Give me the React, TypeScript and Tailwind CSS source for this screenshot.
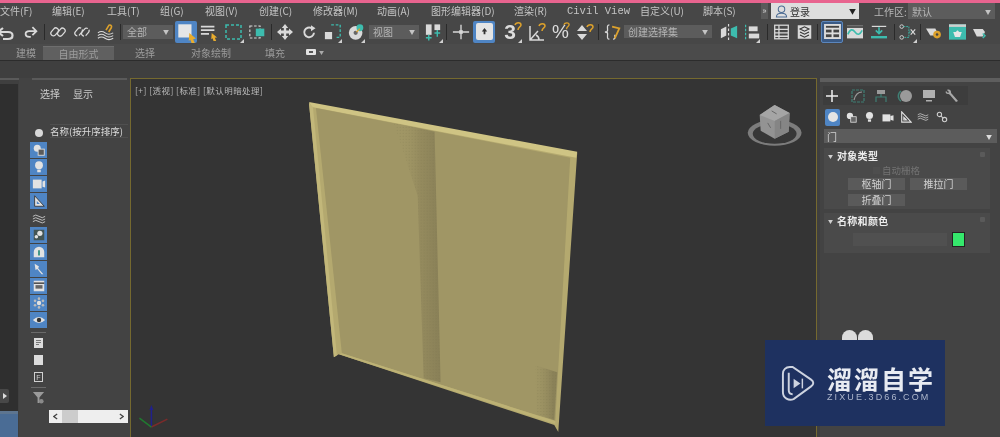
import React from "react";

const cjk = "font-['Noto_Sans_CJK_SC','Liberation_Sans',sans-serif]";

const L = "#d9d9d9";
const T = "#3dbcae";
const O = "#dca12c";

function Ic({ children, vb = "0 0 20 20" }: { children: React.ReactNode; vb?: string }) {
  return (
    <svg viewBox={vb} className="w-full h-full" fill="none">
      {children}
    </svg>
  );
}

function Slot({ c, children }: { c: string; children?: React.ReactNode }) {
  return <div className={`relative shrink-0 h-[22px] flex items-center justify-center ${c}`}>{children}</div>;
}

function Corner() {
  return <div className="absolute right-0 bottom-0 w-0 h-0 border-l-[4px] border-l-transparent border-b-[4px] border-b-[#d0d0d0]" />;
}

function Sep({ c }: { c: string }) {
  return <div className={`shrink-0 w-px h-[16px] bg-[#2a2a2a] ${c}`} />;
}

function Drop({ c, text, h = "h-[14px]" }: { c: string; text: string; h?: string }) {
  return (
    <div className={`shrink-0 ${h} bg-[#5c5c5c] flex items-center justify-between px-1 text-[10px] text-[#b4b4b4] ${cjk} ${c}`}>
      <span>{text}</span>
      <span className="text-[6px] text-[#c4c4c4]">▼</span>
    </div>
  );
}

const cursor = <path d="M13 11l6 5-2.500.5L18 20h-3l-1-3-1.500 1z" fill="#e8ac2e" />;

const Link = ({ broken }: { broken?: boolean }) => (
  <Ic>
    <rect x="0.500" y="6.500" width="11" height="6.500" rx="3.200" transform="rotate(-50 6 10)" stroke={L} strokeWidth="1.600" strokeDasharray={broken ? "9 2" : undefined} />
    <rect x="8.500" y="7" width="11" height="6.500" rx="3.200" transform="rotate(-50 14 10)" stroke={L} strokeWidth="1.600" strokeDasharray={broken ? "9 2" : undefined} />
  </Ic>
);

const menu: [string, string][] = [
  ["文件(F)", "w-[52px]"],
  ["编辑(E)", "w-[55px]"],
  ["工具(T)", "w-[53px]"],
  ["组(G)", "w-[45px]"],
  ["视图(V)", "w-[54px]"],
  ["创建(C)", "w-[54px]"],
  ["修改器(M)", "w-[64px]"],
  ["动画(A)", "w-[54px]"],
  ["图形编辑器(D)", "w-[83px]"],
  ["渲染(R)", "w-[53px]"],
  ["Civil View", "w-[73px]"],
  ["自定义(U)", "w-[63px]"],
  ["脚本(S)", "w-[57px]"],
];

const tabs: [string, string][] = [
  ["建模", "ml-[16px] w-[18px]"],
  ["自由形式", "ml-[9px] w-[71px] bg-[#606060] h-[14px] mt-[2px] border-t border-[#6e6e6e]"],
  ["选择", "ml-[21px] w-[18px]"],
  ["对象绘制", "ml-[38px] w-[36px]"],
  ["填充", "ml-[38px] w-[18px]"],
];

function Blue({ children }: { children: React.ReactNode }) {
  return (
    <div className="w-[17px] h-[16px] mb-px bg-[#4f85c4] flex items-center justify-center shrink-0">
      <svg viewBox="0 0 16 16" className="w-[14px] h-[14px]" fill="none">
        {children}
      </svg>
    </div>
  );
}

const C = "#e2e2e2";

function LeftIcons() {
  return (
    <div className="w-[17px] ml-[11px] mt-[51px] flex flex-col items-center shrink-0">
      <div className="w-[8px] h-[8px] rounded-full bg-[#d8d8d8] mb-[5px]" />
      <Blue>
        <circle cx="6" cy="6" r="4" fill={C} />
        <rect x="7" y="7" width="7" height="7" fill="#5a5a5a" stroke={C} />
      </Blue>
      <Blue>
        <circle cx="8" cy="6" r="4.500" fill={C} />
        <rect x="6" y="11" width="4" height="3" fill={C} />
      </Blue>
      <Blue>
        <rect x="1" y="3" width="10" height="10" fill={C} />
        <path d="M12 5l3-1v8l-3-1z" fill={C} />
      </Blue>
      <Blue>
        <path d="M3 2v12h11z" fill={C} stroke="#333" />
        <path d="M5.500 8v3.500h3.500z" fill="#4f85c4" />
      </Blue>
      <div className="h-[17px] flex items-center shrink-0">
        <svg viewBox="0 0 16 12" className="w-[14px] h-[12px]" fill="none" stroke="#cfcfcf">
          <path d="M1 3q3-3 7 0t7 0M1 6q3-3 7 0t7 0M1 9q3-3 7 0t7 0" />
        </svg>
      </div>
      <Blue>
        <rect x="2" y="2" width="12" height="12" fill="#455" />
        <circle cx="9" cy="6" r="3" fill={C} />
        <circle cx="5" cy="10" r="2" fill={C} />
      </Blue>
      <Blue>
        <path d="M2 14V8a6 6 0 0 1 12 0v6z" fill={C} />
        <rect x="7" y="6" width="2" height="6" fill="#2d8c7c" />
      </Blue>
      <Blue>
        <path d="M3 2l5 3-1 2 6 7-2 0-5-6-2 1z" fill={C} />
      </Blue>
      <Blue>
        <rect x="2" y="2" width="12" height="12" fill={C} />
        <rect x="2" y="4" width="12" height="1.500" fill="#333" />
        <rect x="4" y="7" width="8" height="4" fill="#666" />
      </Blue>
      <Blue>
        <circle cx="8" cy="8" r="2.500" fill={C} />
        <circle cx="8" cy="3" r="1.500" fill="#bbb" />
        <circle cx="8" cy="13" r="1.500" fill="#bbb" />
        <circle cx="3.500" cy="5.500" r="1.500" fill="#bbb" />
        <circle cx="12.500" cy="5.500" r="1.500" fill="#bbb" />
        <circle cx="3.500" cy="10.500" r="1.500" fill="#bbb" />
        <circle cx="12.500" cy="10.500" r="1.500" fill="#bbb" />
      </Blue>
      <Blue>
        <path d="M1 8q7-7 14 0q-7 7-14 0z" fill={C} />
        <circle cx="8" cy="8" r="2.500" fill="#333" />
      </Blue>
      <div className="w-[15px] h-px bg-[#6a6a6a] mt-[3px] shrink-0" />
      <div className="w-[9px] h-[10px] bg-[#dcdcdc] mt-[5px] p-[2px] flex flex-col gap-px shrink-0">
        <div className="h-px bg-[#777]" />
        <div className="h-px bg-[#777]" />
        <div className="h-px w-[3px] bg-[#777]" />
      </div>
      <div className="w-[9px] h-[10px] bg-[#dcdcdc] mt-[7px] shrink-0" />
      <div className="w-[9px] h-[10px] border border-[#d0d0d0] mt-[7px] shrink-0 flex items-center justify-center text-[7px] leading-none text-[#d0d0d0] font-['Liberation_Sans',sans-serif]">F</div>
      <div className="w-[15px] h-px bg-[#6a6a6a] mt-[5px] shrink-0" />
      <svg viewBox="0 0 14 14" className="w-[13px] h-[13px] mt-[3px] shrink-0">
        <path d="M1 1h12L8 7v6H6V7z" fill="#9a9a9a" />
        <circle cx="10" cy="11" r="2.500" fill="#8a8a8a" />
      </svg>
    </div>
  );
}

function Rollout({ title, c, children }: { title: string; c: string; children: React.ReactNode }) {
  return (
    <div className={`w-[166px] ml-[4px] bg-[#4a4a4a] relative ${c}`}>
      <div className={`h-[15px] pl-[4px] flex items-center gap-[4px] text-[10px] font-bold text-[#ececec] ${cjk}`}>
        <span className="text-[5px] text-[#d0d0d0]">▼</span>
        <span className="tracking-[0.3px]">{title}</span>
      </div>
      <div className="absolute right-[5px] top-[4px] w-[5px] h-[5px] rounded-[1px] bg-[#5a5a5a]" />
      {children}
    </div>
  );
}

function Btn({ t }: { t: string }) {
  return <div className={`w-[57px] h-[12px] bg-[#5a5a5a] text-[10px] leading-[12px] text-[#d0d0d0] text-center ${cjk}`}>{t}</div>;
}

function RightPanel() {
  return (
    <div className="w-[180px] ml-[3px] shrink-0 bg-[#434343] relative">
      <div className="h-[4px] bg-[#5e5e5e]" />
      <div className="flex items-center h-[19px] mt-[4px] bg-[#3d3d3d] w-[145px] ml-[3px]">
        <svg viewBox="0 0 14 14" className="w-[14px] h-[14px] ml-[2px]" stroke="#efefef" strokeWidth="1.500">
          <path d="M7 1v12M1 7h12" />
        </svg>
        <svg viewBox="0 0 14 14" className="w-[14px] h-[14px] ml-[12px]" fill="none" stroke="#3f7f74" strokeWidth="1.200">
          <rect x="1" y="1" width="12" height="12" strokeDasharray="3 1" />
          <path d="M3 11Q5 3 11 3" stroke="#9a9a9a" />
        </svg>
        <svg viewBox="0 0 14 14" className="w-[14px] h-[14px] ml-[9px]" fill="none" stroke="#3f7f74" strokeWidth="1.200">
          <rect x="3" y="1" width="8" height="4" fill="#9a9a9a" stroke="none" />
          <path d="M7 5v3M2 13V8h10v5" />
        </svg>
        <svg viewBox="0 0 16 14" className="w-[16px] h-[14px] ml-[9px]">
          <circle cx="9" cy="7" r="6" fill="#9a9a9a" />
          <path d="M4 2a6 6 0 0 0 0 10" stroke="#3f7f74" strokeWidth="1.500" fill="none" />
        </svg>
        <svg viewBox="0 0 14 14" className="w-[14px] h-[14px] ml-[9px]">
          <rect x="1" y="1" width="12" height="8" fill="#b0b0b0" />
          <rect x="4" y="11" width="6" height="1.500" fill="#b0b0b0" />
        </svg>
        <svg viewBox="0 0 14 14" className="w-[14px] h-[14px] ml-[9px]" fill="none">
          <path d="M2 1c2-1 4 0 4 2 0 1 0 1 1 2l6 7-2 1-6-7c-1-1-1-1-2-1-2 0-3-2-2-3l2 2 1-1z" fill="#a8a8a8" />
        </svg>
      </div>
      <div className="flex items-center h-[18px] mt-[3px] ml-[5px]">
        <div className="w-[15px] h-[17px] rounded-[2px] bg-[#4f85c4] flex items-center justify-center">
          <div className="w-[10px] h-[10px] rounded-full bg-[#e4e4e4]" />
        </div>
        <svg viewBox="0 0 14 14" className="w-[11px] h-[11px] ml-[6px]">
          <circle cx="5" cy="5" r="4" fill={C} />
          <rect x="6" y="6" width="7" height="7" fill="#666" stroke={C} />
        </svg>
        <svg viewBox="0 0 14 14" className="w-[11px] h-[12px] ml-[7px]">
          <circle cx="7" cy="5" r="4.500" fill={C} />
          <rect x="5" y="10" width="4" height="3" fill={C} />
        </svg>
        <svg viewBox="0 0 14 14" className="w-[12px] h-[11px] ml-[7px]">
          <rect x="0" y="3" width="10" height="9" fill={C} />
          <path d="M10 5l4-1v7l-4-1z" fill={C} />
        </svg>
        <svg viewBox="0 0 14 14" className="w-[12px] h-[12px] ml-[6px]" fill="none" stroke={C} strokeWidth="1.300">
          <path d="M2 1v12h11z" />
          <path d="M4.500 7.500v3h3z" />
        </svg>
        <svg viewBox="0 0 16 12" className="w-[12px] h-[10px] ml-[5px]" fill="none" stroke="#cfcfcf">
          <path d="M1 3q3-3 7 0t7 0M1 6q3-3 7 0t7 0M1 9q3-3 7 0t7 0" />
        </svg>
        <svg viewBox="0 0 14 14" className="w-[12px] h-[12px] ml-[7px]" fill="none" stroke="#cfcfcf" strokeWidth="1.300">
          <circle cx="4" cy="4" r="2.500" />
          <circle cx="10" cy="10" r="2.500" />
          <path d="M6 6l2 2" />
        </svg>
      </div>
      <div className={`h-[14px] mt-[3px] ml-[4px] w-[173px] bg-[#5c5c5c] flex items-center justify-between px-[3px] text-[10px] text-[#d0d0d0] ${cjk}`}>
        <span>门</span>
        <span className="text-[6px] text-[#dddddd] mr-[2px]">▼</span>
      </div>
      <Rollout title="对象类型" c="h-[61px] mt-[5px]">
        <div className={`h-[14px] flex items-center pl-[49px] gap-[2px] text-[9.500px] text-[#727272] ${cjk}`}>
          <div className="w-[7px] h-[7px] bg-[#4e4e4e]" />
          <span>自动栅格</span>
        </div>
        <div className="flex gap-[5px] pl-[24px] mt-px">
          <Btn t="枢轴门" />
          <Btn t="推拉门" />
        </div>
        <div className="pl-[24px] mt-[4px]">
          <Btn t="折叠门" />
        </div>
      </Rollout>
      <Rollout title="名称和颜色" c="h-[40px] mt-[4px]">
        <div className="flex items-center pl-[29px] mt-[4px]">
          <div className="w-[94px] h-[13px] bg-[#505050]" />
          <div className="w-[13px] h-[15px] ml-[5px] bg-[#35e86c] border border-[#222]" />
        </div>
      </Rollout>
      <div className="flex gap-px ml-[22px] mt-[77px]">
        <div className="w-[15px] h-[20px] rounded-full bg-[#dcdcdc]" />
        <div className="w-[15px] h-[20px] rounded-full bg-[#dcdcdc]" />
      </div>
    </div>
  );
}

function Scene() {
  return (
    <svg viewBox="130 78 686 359" className="absolute inset-0 w-full h-full">
      <defs>
        <linearGradient id="g" gradientUnits="userSpaceOnUse" x1="400" y1="0" x2="438" y2="0">
          <stop offset="0" stopColor="#a09665" stopOpacity="0" />
          <stop offset="0.5" stopColor="#958b5e" />
          <stop offset="1" stopColor="#8a8158" />
        </linearGradient>
        <linearGradient id="h" gradientUnits="userSpaceOnUse" x1="532" y1="0" x2="553" y2="0">
          <stop offset="0" stopColor="#a09665" stopOpacity="0" />
          <stop offset="1" stopColor="#8a8158" />
        </linearGradient>
        <pattern id="d" width="3" height="3" patternUnits="userSpaceOnUse">
          <rect width="1" height="1" fill="#6f6845" fillOpacity="0.220" />
        </pattern>
      </defs>
      <polygon points="308,102 577,152 558,432 554,425 338,354 333,357" fill="#b4a96f" />
      <polygon points="308,101 577,151 576,157 311,106" fill="#cfc484" />
      <polygon points="315,107 570,157 555,421 341,353" fill="#a09665" />
      <polygon points="308,102 312,106 336,355 333,357" fill="#c2b77a" />
      <polygon points="341,353 555,421 555,424 338,354" fill="#bdb275" />
      <polygon points="393,122 434,131 440,382 423,378 417,195" fill="url(#g)" />
      <polygon points="393,122 434,131 440,382 423,378 417,195" fill="url(#d)" />
      <polygon points="535,365 557,372 554,420 536,414" fill="url(#h)" />
      <polygon points="535,365 557,372 554,420 536,414" fill="url(#d)" />
      {/* view cube */}
      <ellipse cx="775" cy="132" rx="27" ry="13" fill="#7c7c7c" />
      <ellipse cx="775" cy="133" rx="22" ry="10" fill="#373737" />
      <polygon points="760,114 775,104 790,112 789,131 775,138 761,130" fill="#939393" />
      <polygon points="760,114 775,104 790,112 775,120" fill="#a5a5a5" />
      <polygon points="775,120 790,112 789,131 775,138" fill="#858585" />
      <path d="M768 122l3 5M781 120v8M772 110l5 3" stroke="#666" strokeWidth="1" />
      {/* axes */}
      <path d="M150 410V427" stroke="#20208c" strokeWidth="1.500" />
      <path d="M150 405l-2 5h4z" fill="#20208c" />
      <path d="M150 427L166 419" stroke="#7c2a2a" strokeWidth="1.500" />
      <path d="M150 427L138 418" stroke="#207a30" strokeWidth="1.500" />
    </svg>
  );
}

export default function App() {
  return (
    <div className="w-[1000px] h-[437px] overflow-hidden bg-[#3f3f3f] flex flex-col relative blur-[0.35px]">
      <div className="h-[3px] bg-[#e8648f] shrink-0" />
      {/* Menu */}
      <div className={`h-[16px] bg-[#474747] shrink-0 flex items-center text-[10px] text-[#c4c4c4] ${cjk}`}>
        <div className="flex items-center shrink-0">
          {menu.map(([t, w]) => (
            <span key={t} className={`${w} shrink-0 whitespace-nowrap leading-[16px] ${t === "Civil View" ? "font-['Liberation_Mono',monospace] text-[10.500px]" : ""}`}>
              {t}
            </span>
          ))}
        </div>
        <span className="w-[7px] ml-[1px] h-[16px] bg-[#5a5a5a] text-[9px] leading-[15px] text-[#d0d0d0] text-center shrink-0">»</span>
        <div className="w-[88px] h-[16px] ml-[3px] bg-[#dedede] flex items-center text-[#333] shrink-0">
          <svg viewBox="0 0 14 14" className="w-[13px] h-[13px] ml-[4px]" fill="none" stroke="#4a6a92" strokeWidth="1.100">
            <circle cx="7" cy="4.500" r="3.500" />
            <path d="M1.500 13c0-3 3-4 5.500-4s5.500 1 5.500 4z" />
          </svg>
          <span className="ml-[2px] text-[10px]">登录</span>
          <span className="ml-auto mr-[3px] text-[7px] text-[#222]">▼</span>
        </div>
        <span className="ml-[15px] w-[34px] text-[10px] text-[#b8b8b8] shrink-0 whitespace-nowrap">工作区:</span>
        <Drop c="w-[87px]" h="h-[16px]" text="默认" />
      </div>
      {/* Toolbar */}
      <div className="h-[25px] bg-[#474747] shrink-0 flex items-center">
        <Slot c="w-[15px]">
          <Ic vb="0 0 15 20">
            <path d="M-2 10h10c6 0 6 7 0 7H3M3 6l-5 4 5 4" stroke={L} strokeWidth="2.200" />
          </Ic>
        </Slot>
        <Slot c="w-[16px] ml-[7px]">
          <Ic>
            <path d="M18 9H9c-6 0-6 7 0 7h2M13 4l5 5-5 5" stroke={L} strokeWidth="2.200" />
          </Ic>
        </Slot>
        <Sep c="ml-[6px]" />
        <Slot c="w-[16px] ml-[5px]"><Link /></Slot>
        <Slot c="w-[16px] ml-[8px]"><Link broken /></Slot>
        <Slot c="w-[18px] ml-[7px]">
          <Ic>
            <path d="M1 11q4-3 8 0t9 0M1 14q4-3 8 0t9 0M1 17q4-3 8 0t9 0" stroke={L} strokeWidth="1.200" />
            <path d="M10 8l3-5c1-2 4 0 3 2l-3 5" stroke={O} strokeWidth="1.800" />
          </Ic>
        </Slot>
        <Sep c="ml-[5px]" />
        <Drop c="w-[50px] ml-[2px]" text="全部" />
        <Slot c="w-[22px] ml-[2px] bg-[#4f85c4] rounded-[2px]">
          <Ic>
            <rect x="3" y="3" width="12" height="12" fill="#e6e6e6" />
            {cursor}
          </Ic>
        </Slot>
        <Slot c="w-[18px] ml-[3px]">
          <Ic>
            <path d="M1 4h15M1 8h15M1 12h9" stroke={L} strokeWidth="2" />
            {cursor}
          </Ic>
        </Slot>
        <Slot c="w-[20px] ml-[6px]">
          <Ic>
            <rect x="2" y="3" width="15" height="14" stroke={T} strokeWidth="1.500" strokeDasharray="3 2" />
          </Ic>
          <Corner />
        </Slot>
        <Slot c="w-[17px] ml-[5px]">
          <Ic>
            <rect x="1" y="3" width="12" height="14" stroke={L} strokeWidth="1.300" strokeDasharray="3 2" />
            <rect x="8" y="6" width="10" height="9" fill={T} />
          </Ic>
        </Slot>
        <Sep c="ml-[5px]" />
        <Slot c="w-[16px] ml-[5px]">
          <Ic>
            <path d="M10 0l4 5h-2.500v3H15V5.500l5 4.500-5 4.500V12h-3.500v3H14l-4 5-4-5h2.500v-3H5v2.500L0 10l5-4.500V8h3.500V5H6z" fill={L} />
          </Ic>
        </Slot>
        <Slot c="w-[15px] ml-[9px]">
          <Ic>
            <path d="M16 11a6.500 6.500 0 1 1-3-6" stroke={L} strokeWidth="2.600" />
            <path d="M12 1l6 4-6 4z" fill={L} />
          </Ic>
        </Slot>
        <Slot c="w-[18px] ml-[7px]">
          <Ic>
            <path d="M8 2h10v14h-5" stroke={T} strokeWidth="1.500" strokeDasharray="3 2" />
            <rect x="1" y="10" width="8" height="8" fill={L} />
          </Ic>
          <Corner />
        </Slot>
        <Slot c="w-[17px] ml-[6px]">
          <Ic>
            <circle cx="9" cy="11" r="8" fill={L} />
            <circle cx="9" cy="11" r="2.500" fill="#666" />
            <circle cx="14" cy="5" r="4" fill={T} />
            <path d="M10 10l4-4" stroke={O} strokeWidth="1.500" />
          </Ic>
          <Corner />
        </Slot>
        <Drop c="w-[50px] ml-[4px]" text="视图" />
        <Slot c="w-[19px] ml-[5px]">
          <Ic>
            <rect x="2" y="2" width="6" height="11" fill={L} />
            <rect x="11" y="2" width="6" height="6" fill={L} />
            <path d="M5 13v6M2 16h6M14 8v7M11 11h6" stroke={T} strokeWidth="1.500" />
          </Ic>
          <Corner />
        </Slot>
        <Sep c="ml-[3px]" />
        <Slot c="w-[18px] ml-[5px]">
          <Ic>
            <path d="M10 2v16M1 10h18" stroke={L} strokeWidth="1.500" />
            <rect x="8" y="8" width="4" height="4" fill={L} />
          </Ic>
        </Slot>
        <Slot c="w-[22px] ml-[3px] bg-[#4f85c4] rounded-[2px]">
          <div className="w-[17px] h-[17px] bg-[#e4e4e4] rounded-[2px] flex items-center justify-center">
            <svg viewBox="0 0 10 10" className="w-[9px] h-[9px]">
              <path d="M5 1l3 4H6v3H4V5H2z" fill="#333" />
            </svg>
          </div>
        </Slot>
        <Slot c="w-[18px] ml-[9px]">
          <span className="text-[21px] leading-none font-bold text-[#dcdcdc] font-['Liberation_Sans',sans-serif] -ml-[6px]">3</span>
          <svg viewBox="0 0 8 10" className="absolute right-0 top-[1px] w-[8px] h-[10px]" fill="none">
            <path d="M1 3c1-3 6-3 6 0 0 2-3 2-3 5" stroke={O} strokeWidth="1.500" />
          </svg>
          <Corner />
        </Slot>
        <Slot c="w-[20px] ml-[5px]">
          <Ic>
            <path d="M3 4v14h14M3 18L11 9M9 13c2 1 3 3 3 5" stroke={L} strokeWidth="1.500" />
            <path d="M12 4c1-3 6-3 6 0 0 2-3 2-3 5" stroke={O} strokeWidth="1.500" />
          </Ic>
        </Slot>
        <Slot c="w-[19px] ml-[4px]">
          <span className="text-[19px] leading-none text-[#dcdcdc] font-['Liberation_Sans',sans-serif]">%</span>
          <svg viewBox="0 0 8 10" className="absolute right-0 top-[1px] w-[7px] h-[9px]" fill="none">
            <path d="M1 3c1-3 6-3 6 0 0 2-3 2-3 5" stroke={O} strokeWidth="1.500" />
          </svg>
        </Slot>
        <Slot c="w-[20px] ml-[5px]">
          <Ic>
            <path d="M2 9l5-6 5 6zM2 12l5 6 5-6z" fill={L} />
            <path d="M12 5c1-3 6-3 6 0 0 2-3 2-3 5" stroke={O} strokeWidth="1.500" />
          </Ic>
        </Slot>
        <Sep c="ml-[3px]" />
        <Slot c="w-[18px] ml-[5px]">
          <Ic>
            <path d="M6 2C3 2 4 5 4 8c0 1-1 2-3 2 2 0 3 1 3 2 0 3-1 6 2 6" stroke={L} strokeWidth="1.400" />
            <path d="M12 13c0 2 1 5-2 5" stroke={L} strokeWidth="1.400" />
            <path d="M9 4l8 2-5 11" stroke={O} strokeWidth="2" />
          </Ic>
        </Slot>
        <Drop c="w-[88px] ml-[2px]" h="h-[13px]" text="创建选择集" />
        <Slot c="w-[18px] ml-[8px]">
          <Ic>
            <path d="M7 4L1 7v10l6-3z" fill={L} />
            <path d="M12 14l7 3V3l-7 3z" fill={T} />
            <path d="M9.500 1v18" stroke={L} strokeWidth="1.300" strokeDasharray="3 2" />
          </Ic>
        </Slot>
        <Slot c="w-[16px] ml-[6px]">
          <Ic>
            <path d="M2 1v18" stroke={T} strokeWidth="1.500" strokeDasharray="3 2" />
            <rect x="6" y="3" width="11" height="6" fill={L} />
            <rect x="6" y="12" width="13" height="6" fill={L} />
          </Ic>
          <Corner />
        </Slot>
        <Sep c="ml-[7px]" />
        <Slot c="w-[17px] ml-[5px]">
          <Ic>
            <rect x="2" y="2" width="16" height="16" stroke={L} strokeWidth="1.500" />
            <path d="M2 7h16M2 11h16M2 15h16M7 2v16" stroke={L} strokeWidth="1.500" />
          </Ic>
        </Slot>
        <Slot c="w-[15px] ml-[7px]">
          <Ic>
            <rect x="1" y="1" width="18" height="18" fill={L} />
            <path d="M4 6l6-3 6 3-6 3zM4 10l6 3 6-3M4 14l6 3 6-3" stroke="#333" strokeWidth="1.400" />
          </Ic>
        </Slot>
        <Sep c="ml-[5px]" />
        <Slot c="w-[22px] ml-[3px] bg-[#3a5a85] rounded-[2px] border border-[#5b86bd]">
          <svg viewBox="0 0 18 16" className="w-[17px] h-[15px]">
            <rect width="18" height="16" fill="#dcdcdc" />
            <rect x="2" y="2" width="14" height="2" fill="#444" />
            <rect x="2" y="6" width="6" height="3" fill="#444" />
            <rect x="10" y="6" width="6" height="3" fill="#444" />
            <rect x="2" y="11" width="6" height="3" fill="#444" />
            <rect x="10" y="11" width="6" height="3" fill="#444" />
          </svg>
        </Slot>
        <Slot c="w-[16px] ml-[4px]">
          <Ic>
            <rect x="0" y="2" width="20" height="16" fill={L} />
            <rect x="0" y="2" width="20" height="3" fill="#555" />
            <path d="M1 13c3-7 6-7 9-3s6 4 9-2" stroke={T} strokeWidth="2" />
          </Ic>
        </Slot>
        <Slot c="w-[16px] ml-[8px]">
          <Ic>
            <path d="M1 3h18" stroke={L} strokeWidth="1.500" />
            <path d="M10 4v7M6 8l4 4 4-4" stroke={T} strokeWidth="2" />
            <rect x="0" y="15" width="20" height="3" fill={T} />
          </Ic>
        </Slot>
        <Sep c="ml-[7px]" />
        <Slot c="w-[18px] ml-[4px]">
          <Ic>
            <circle cx="3" cy="4" r="2" stroke={L} />
            <circle cx="3" cy="16" r="2" stroke={L} />
            <path d="M5 4h6v12H5M11 10h2" stroke={T} strokeDasharray="2 1" />
            <path d="M13 7l5 6M18 7l-5 6" stroke={L} strokeWidth="1.300" />
          </Ic>
          <Corner />
        </Slot>
        <Sep c="ml-[3px]" />
        <Slot c="w-[17px] ml-[5px]">
          <Ic>
            <path d="M0 6h11l2 4v4H5z" fill={L} />
            <circle cx="13" cy="13" r="4.500" fill={O} />
            <circle cx="13" cy="13" r="1.500" fill="#444" />
          </Ic>
        </Slot>
        <Slot c="w-[17px] ml-[6px]">
          <Ic>
            <rect x="0" y="1" width="20" height="18" fill={T} />
            <rect x="0" y="1" width="20" height="3" fill="#cfcfcf" />
            <path d="M5 10h10l-2 6H7z" fill="#e6e6e6" />
            <path d="M8 10l2-2 2 2" fill="#e6e6e6" />
          </Ic>
        </Slot>
        <Slot c="w-[15px] ml-[7px]">
          <Ic>
            <path d="M0 6h13l3 4-3 6H5z" fill={L} />
            <path d="M13 12l3 3-3 3" stroke={T} strokeWidth="2" />
          </Ic>
        </Slot>
      </div>
      {/* Ribbon */}
      <div className={`h-[16px] bg-[#4b4b4b] shrink-0 flex items-center text-[10px] text-[#9c9c9c] ${cjk}`}>
        {tabs.map(([t, c]) => (
          <span key={t} className={`${c} shrink-0 text-center leading-[13px] whitespace-nowrap`}>{t}</span>
        ))}
        <div className="ml-[23px] w-[10px] h-[6px] rounded-[1px] bg-[#e2e2e2] flex items-center justify-center shrink-0">
          <div className="w-[4px] h-[2px] bg-[#555]" />
        </div>
        <span className="ml-[3px] text-[5px] text-[#aaaaaa]">▼</span>
      </div>
      <div className="h-px bg-[#2c2c2c] shrink-0" />
      {/* Band */}
      <div className="h-[17px] bg-[#3f3f3f] shrink-0" />
      {/* Main */}
      <div className="flex-1 flex min-h-0">
        <div className="w-[18px] shrink-0 flex flex-col">
          <div className="h-[2px] w-[25px] bg-[#5a5a5a]" />
          <div className="h-[4px]" />
          <div className="h-[327px] bg-[#2f2f2f] relative">
            <div className="absolute left-0 bottom-[8px] w-[9px] h-[14px] rounded-r-[2px] bg-[#484848] flex items-center justify-center">
              <div className="w-0 h-0 border-y-[3px] border-y-transparent border-l-[4px] border-l-[#dddddd]" />
            </div>
          </div>
          <div className="flex-1 bg-[#4a6c95] border-t-[3px] border-[#5d7590]" />
        </div>
        <div className="w-[111px] ml-[1px] shrink-0 bg-[#434343] flex relative">
          <div className="absolute top-0 left-[13px] right-[3px] h-[2px] bg-[#5a5a5a]" />
          <LeftIcons />
          <div className="flex-1 min-w-0 flex flex-col relative">
            <div className={`absolute -left-[7px] top-[8px] flex gap-[13px] text-[10px] text-[#cccccc] whitespace-nowrap ${cjk}`}>
              <span>选择</span>
              <span>显示</span>
            </div>
            <div className={`mt-[46px] ml-[3px] mr-[2px] h-[14px] border-y border-[#4f4f4f] text-[9.500px] leading-[12px] text-[#dcdcdc] whitespace-nowrap ${cjk}`}>
              名称(按升序排序)
            </div>
            <div className="mt-auto mb-[14px] ml-[2px] mr-[2px] h-[13px] bg-[#eeeeee] flex items-center px-[4px]">
              <svg viewBox="0 0 6 8" className="w-[5px] h-[7px]" fill="none" stroke="#444" strokeWidth="1.500"><path d="M5 1L1 4l4 3" /></svg>
              <div className="w-[16px] h-[13px] bg-[#cccccc] ml-[4px]" />
              <svg viewBox="0 0 6 8" className="w-[5px] h-[7px] ml-auto" fill="none" stroke="#444" strokeWidth="1.500"><path d="M1 1l4 3-4 3" /></svg>
            </div>
          </div>
        </div>
        <div className="flex-1 relative bg-[#343434] border-l border-t border-r border-[#75692f]">
          <Scene />
          <div className={`absolute left-[4px] top-[5px] text-[8.500px] tracking-[0.45px] text-[#b8b8b8] whitespace-nowrap ${cjk}`}>
            [+] [透视] [标准] [默认明暗处理]
          </div>
        </div>
        <RightPanel />
      </div>
      {/* Watermark */}
      <div className="absolute left-[765px] top-[340px] w-[180px] h-[86px] bg-[#1e3160] flex items-center">
        <svg viewBox="0 0 36 38" className="w-[35px] h-[37px] ml-[15px] shrink-0" fill="none" stroke="#cdd3e0" strokeWidth="2">
          <path d="M10 2h3l19 13c3 2 3 5 0 7L14 35c-5 2-11-1-11-7V9c0-4 3-7 7-7z" />
          <path d="M9 8v18c0 3 2 4 4 4" />
          <path d="M14 14l7 5-7 5z" fill="#cdd3e0" stroke="none" />
          <path d="M23 14v10" strokeWidth="1.500" />
        </svg>
        <div className="ml-[12px] flex flex-col gap-[1px]">
          <span className={`text-[25px] leading-[26px] font-bold text-[#e8ebf2] tracking-[2px] whitespace-nowrap ${cjk}`}>溜溜自学</span>
          <span className="text-[9px] leading-[10px] text-[#aeb7cc] tracking-[2.100px] font-['Liberation_Sans',sans-serif] whitespace-nowrap">ZIXUE.3D66.COM</span>
        </div>
      </div>
    </div>
  );
}
